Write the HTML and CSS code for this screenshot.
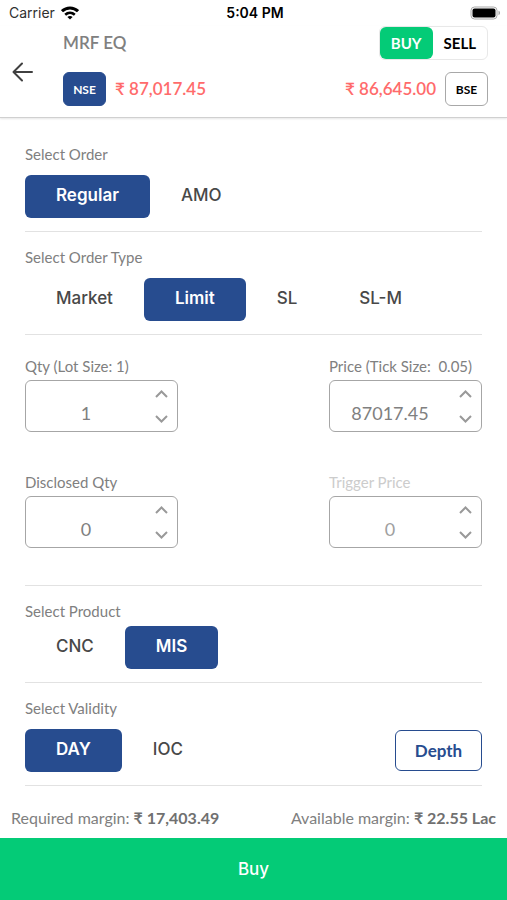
FILE: index.html
```html
<!DOCTYPE html>
<html lang="en">
<head>
  <meta charset="UTF-8">
  <meta name="viewport" content="width=device-width, initial-scale=1.0">
  <link rel="stylesheet" href="styles.css">
  <title>MRF EQ - Buy</title>
</head>
<body>
  <div class="status-bar">
    <div class="carrier">
      <span>Carrier</span>
      <svg width="18" height="14" viewBox="0 0 18 14" fill="none" stroke="#000" stroke-width="3" aria-hidden="true">
        <path d="M1 5.2C5.6 0.9 12.4 0.9 17 5.2" />
        <path d="M4.2 8.7C7 6.2 11 6.2 13.8 8.7" stroke-width="2.6" />
        <path d="M9 13.5L6.4 10.9C7.9 9.6 10.1 9.6 11.6 10.9Z" fill="#000" stroke="none" />
      </svg>
    </div>
    <span class="clock">5:04 PM</span>
    <svg class="battery" width="31" height="14" viewBox="0 0 31 14" aria-hidden="true">
      <rect x="1" y="1" width="26" height="12" rx="3.5" fill="#fff" stroke="#a8a8a8" />
      <rect x="2.5" y="2.5" width="23" height="9" rx="2" fill="#000" />
      <path d="M28.5 4.8C30.5 5.4 30.5 8.6 28.5 9.2Z" fill="#a8a8a8" />
    </svg>
  </div>

  <header class="header">
    <button type="button" class="back" aria-label="Back">
      <svg width="22" height="20" viewBox="0 0 22 20" fill="none" stroke="#404040" stroke-width="2" stroke-linecap="round" stroke-linejoin="round">
        <path d="M20 10H2M10 1.5L1.5 10L10 18.5" />
      </svg>
    </button>
    <div class="header-content">
      <div class="header-row">
        <h1>MRF EQ</h1>
        <div class="side" role="radiogroup" aria-label="Side">
          <label><input type="radio" name="side" checked><span>BUY</span></label>
          <label><input type="radio" name="side"><span>SELL</span></label>
        </div>
      </div>
      <div class="header-row">
        <div class="quote">
          <button type="button" class="exchange active">NSE</button>
          <span>₹ 87,017.45</span>
        </div>
        <div class="quote">
          <span>₹ 86,645.00</span>
          <button type="button" class="exchange">BSE</button>
        </div>
      </div>
    </div>
  </header>

  <form id="order-form">
    <section class="section first">
      <h2 id="order-title">Select Order</h2>
      <div class="choices" role="radiogroup" aria-labelledby="order-title">
        <label><input type="radio" name="order" checked><span>Regular</span></label>
        <label><input type="radio" name="order"><span>AMO</span></label>
      </div>
    </section>

    <section class="section">
      <h2 id="type-title">Select Order Type</h2>
      <div class="choices" role="radiogroup" aria-labelledby="type-title">
        <label><input type="radio" name="type"><span>Market</span></label>
        <label><input type="radio" name="type" checked><span>Limit</span></label>
        <label><input type="radio" name="type"><span>SL</span></label>
        <label><input type="radio" name="type"><span>SL-M</span></label>
      </div>
    </section>

    <section class="section fields">
      <div class="field">
        <label for="qty">Qty (Lot Size: 1)</label>
        <div class="stepper">
          <input type="text" inputmode="numeric" id="qty" value="1">
          <div class="arrows">
            <button type="button" aria-label="Increase quantity"><svg width="13" height="8" viewBox="0 0 13 8"><path d="M1 7L6.5 1.5L12 7" /></svg></button>
            <button type="button" aria-label="Decrease quantity"><svg width="13" height="8" viewBox="0 0 13 8"><path d="M1 1L6.5 6.5L12 1" /></svg></button>
          </div>
        </div>
      </div>
      <div class="field">
        <label for="price">Price (Tick Size: &nbsp;0.05)</label>
        <div class="stepper">
          <input type="text" inputmode="decimal" id="price" value="87017.45">
          <div class="arrows">
            <button type="button" aria-label="Increase price"><svg width="13" height="8" viewBox="0 0 13 8"><path d="M1 7L6.5 1.5L12 7" /></svg></button>
            <button type="button" aria-label="Decrease price"><svg width="13" height="8" viewBox="0 0 13 8"><path d="M1 1L6.5 6.5L12 1" /></svg></button>
          </div>
        </div>
      </div>
      <div class="field">
        <label for="disclosed">Disclosed Qty</label>
        <div class="stepper">
          <input type="text" inputmode="numeric" id="disclosed" value="0">
          <div class="arrows">
            <button type="button" aria-label="Increase disclosed quantity"><svg width="13" height="8" viewBox="0 0 13 8"><path d="M1 7L6.5 1.5L12 7" /></svg></button>
            <button type="button" aria-label="Decrease disclosed quantity"><svg width="13" height="8" viewBox="0 0 13 8"><path d="M1 1L6.5 6.5L12 1" /></svg></button>
          </div>
        </div>
      </div>
      <div class="field disabled">
        <label for="trigger">Trigger Price</label>
        <div class="stepper">
          <input type="text" inputmode="decimal" id="trigger" value="0" disabled>
          <div class="arrows">
            <button type="button" aria-label="Increase trigger price" disabled><svg width="13" height="8" viewBox="0 0 13 8"><path d="M1 7L6.5 1.5L12 7" /></svg></button>
            <button type="button" aria-label="Decrease trigger price" disabled><svg width="13" height="8" viewBox="0 0 13 8"><path d="M1 1L6.5 6.5L12 1" /></svg></button>
          </div>
        </div>
      </div>
    </section>

    <section class="section compact">
      <h2 id="product-title">Select Product</h2>
      <div class="choices" role="radiogroup" aria-labelledby="product-title">
        <label><input type="radio" name="product"><span>CNC</span></label>
        <label><input type="radio" name="product" checked><span>MIS</span></label>
      </div>
    </section>

    <section class="section">
      <h2 id="validity-title">Select Validity</h2>
      <div class="validity-row">
        <div class="choices" role="radiogroup" aria-labelledby="validity-title">
          <label><input type="radio" name="validity" checked><span>DAY</span></label>
          <label><input type="radio" name="validity"><span>IOC</span></label>
        </div>
        <button type="button" class="depth">Depth</button>
      </div>
    </section>
  </form>

  <div class="margins">
    <span>Required margin: <strong>₹ 17,403.49</strong></span>
    <span>Available margin: <strong>₹ 22.55 Lac</strong></span>
  </div>
  <button type="submit" form="order-form" class="submit">Buy</button>
</body>
</html>
```

FILE: styles.css
```css
* {
  box-sizing: border-box;
}
body {
  margin: 0;
  min-height: 100vh;
  display: flex;
  flex-direction: column;
  background-color: #ffffff;
  color: #808080;
  font-family: Lato, "Noto Sans", sans-serif;
  font-size: 15px;
  line-height: 20px;
}
h1, h2 {
  margin: 0;
  font-weight: normal;
}
button, input {
  font-family: inherit;
  padding: 0;
  margin: 0;
}
button {
  cursor: pointer;
}
svg {
  display: block;
}

/* status bar */
.status-bar {
  display: grid;
  grid-template-columns: 1fr auto 1fr;
  align-items: center;
  height: 26px;
  padding: 0 6px 0 9px;
  color: #000000;
  font-family: Inter, sans-serif;
  font-size: 14px;
}
.carrier {
  display: flex;
  align-items: center;
  gap: 6px;
  color: #303030;
}
.clock {
  font-weight: 600;
}
.battery {
  justify-self: end;
}

/* header */
.header {
  display: flex;
  align-items: center;
  padding-right: 19px;
  border-bottom: 1px solid #d0d0d0;
  box-shadow: 0 1px 2px rgba(0, 0, 0, 0.1);
}
.back {
  display: flex;
  justify-content: center;
  width: 63px;
  padding: 0 18px 0 0;
  border: none;
  background: none;
}
.header-content {
  flex: 1;
  display: flex;
  flex-direction: column;
  gap: 12px;
  padding-bottom: 11px;
}
.header-row {
  display: flex;
  justify-content: space-between;
  align-items: center;
}
h1 {
  font-size: 17px;
  font-weight: 600;
}
.side {
  display: flex;
  border: 1px solid #e8e8e8;
  border-radius: 6px;
}
.side label {
  display: flex;
}
.side span {
  padding: 6px 11px;
  border-radius: 6px;
  color: #000000;
  font-size: 15px;
  font-weight: 700;
}
.side input:checked + span {
  background-color: #04cb77;
  color: #ffffff;
}
.side input, .choices input {
  position: absolute;
  opacity: 0;
}
.quote {
  display: flex;
  align-items: center;
  gap: 9px;
  color: #ff6b6b;
  font-size: 17px;
  font-weight: 600;
}
.exchange {
  width: 43px;
  height: 34px;
  border: 1px solid #a8a8a8;
  border-radius: 6px;
  background-color: #ffffff;
  color: #000000;
  font-size: 12px;
  font-weight: 700;
}
.exchange.active {
  border-color: #274c8f;
  background-color: #274c8f;
  color: #ffffff;
}

/* form */
form {
  padding: 0 25px;
}
.section {
  padding: 15px 0 13px;
  border-bottom: 1px solid #e2e2e2;
}
.section.first {
  padding-top: 26px;
}
h2 {
  margin-bottom: 11px;
  font-size: 15px;
}
.compact h2 {
  margin-bottom: 5px;
}
.choices {
  display: flex;
}
.choices label {
  display: flex;
}
.choices span {
  height: 43px;
  padding: 0 31px;
  border-radius: 6px;
  color: #484848;
  font-family: Inter, sans-serif;
  font-size: 17px;
  font-weight: 500;
  line-height: 41px;
}
.choices input:checked + span {
  background-color: #274c8f;
  color: #ffffff;
  font-weight: 600;
}
.fields {
  display: grid;
  grid-template-columns: 153px 153px;
  justify-content: space-between;
  row-gap: 40px;
  padding: 21px 0 37px;
}
.field label {
  display: block;
  margin-bottom: 4px;
  white-space: nowrap;
}
.field.disabled label {
  color: #cccccc;
}
.stepper {
  display: flex;
  height: 52px;
  border: 1px solid #a6a6a6;
  border-radius: 6px;
}
.stepper input {
  flex: 1;
  min-width: 0;
  padding-top: 14px;
  border: none;
  background: none;
  color: #808080;
  font-size: 18px;
  text-align: center;
}
.stepper input:disabled {
  color: #a0a0a0;
}
.arrows {
  display: flex;
  flex-direction: column;
  width: 31px;
}
.arrows button {
  flex: 1;
  display: flex;
  align-items: center;
  border: none;
  background: none;
  padding-left: 9px;
}
.arrows path {
  fill: none;
  stroke: #999999;
  stroke-width: 2;
}
.validity-row {
  display: flex;
  justify-content: space-between;
  align-items: center;
}
.depth {
  width: 87px;
  height: 41px;
  border: 1px solid #274c8f;
  border-radius: 6px;
  background-color: #ffffff;
  color: #274c8f;
  font-size: 17px;
  font-weight: 700;
}

/* footer */
.margins {
  flex: 1;
  display: flex;
  justify-content: space-between;
  align-items: center;
  padding: 12px 11px 0;
  font-size: 16px;
}
.margins strong {
  color: #707070;
}
.submit {
  height: 62px;
  border: none;
  background-color: #04cb77;
  color: #ffffff;
  font-family: Inter, sans-serif;
  font-size: 17px;
  font-weight: 500;
}
```
